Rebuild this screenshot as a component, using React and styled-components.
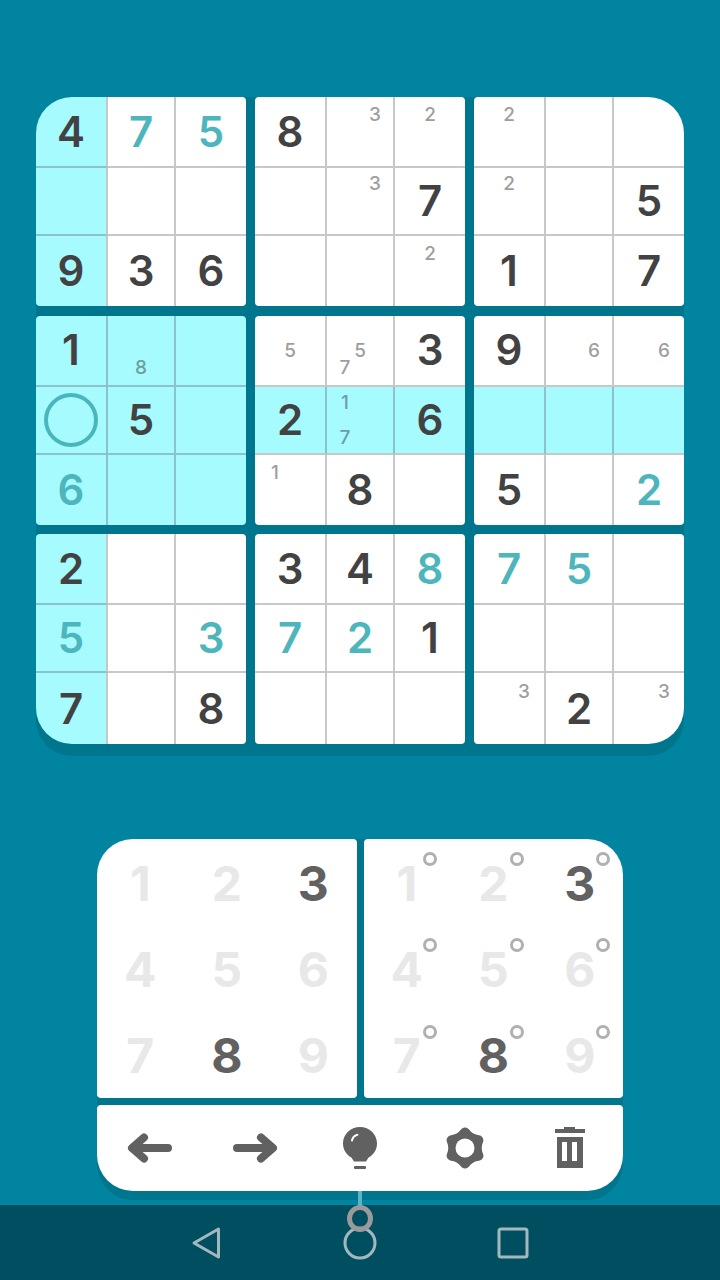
import React from 'react';
import styled, { createGlobalStyle } from 'styled-components';

const GlobalStyle = createGlobalStyle`
  html, body {
    margin: 0;
    padding: 0;
    background: #00849f;
  }
`;

// 'x*' = pre-filled teal digit, 'n..' = pencil notes, 'o' = selected cell
const PUZZLE = [
  ['4', '7*', '5*', '8', 'n3', 'n2', 'n2', '', ''],
  ['', '', '', '', 'n3', '7', 'n2', '', '5'],
  ['9', '3', '6', '', '', 'n2', '1', '', '7'],
  ['1', 'n8', '', 'n5', 'n57', '3', '9', 'n6', 'n6'],
  ['o', '5', '', '2', 'n17', '6', '', '', ''],
  ['6*', '', '', 'n1', '8', '', '5', '', '2*'],
  ['2', '', '', '3', '4', '8*', '7*', '5*', ''],
  ['5*', '', '3*', '7*', '2*', '1', '', '', ''],
  ['7', '', '8', '', '', '', 'n3', '2', 'n3'],
];

const SELECTED = { row: 4, col: 0 };
const DIGITS = [1, 2, 3, 4, 5, 6, 7, 8, 9];
const AVAILABLE = [3, 8];

const isHighlighted = (row, col) =>
  row === SELECTED.row ||
  col === SELECTED.col ||
  (Math.floor(row / 3) === Math.floor(SELECTED.row / 3) &&
    Math.floor(col / 3) === Math.floor(SELECTED.col / 3));

const cornerRadius = (index) => {
  if (index === 0) return '36px 4px 4px 4px';
  if (index === 2) return '4px 36px 4px 4px';
  if (index === 6) return '4px 4px 4px 36px';
  if (index === 8) return '4px 4px 36px 4px';
  return '4px';
};

const Page = styled.div`
  position: relative;
  display: flex;
  flex-direction: column;
  align-items: center;
  width: 720px;
  height: 1280px;
  padding-top: 97px;
  box-sizing: border-box;
  overflow: hidden;
  background: #00849f;
  font-family: Inter, "Liberation Sans", sans-serif;
`;

const Board = styled.div`
  display: grid;
  grid-template-columns: repeat(3, 210px);
  grid-template-rows: 209px 209px 210px;
  column-gap: 9px;
  row-gap: 9.5px;
  width: 648px;
  padding-bottom: 12px;
  border-radius: 36px;
  background: #00758e;
`;

const Block = styled.div`
  display: grid;
  grid-template-columns: 72px 68px 70px;
  grid-template-rows: 71px 68px 1fr;
  overflow: hidden;
  border-radius: ${(p) => p.$radius};
`;

const Cell = styled.div`
  display: flex;
  align-items: center;
  justify-content: center;
  box-sizing: border-box;
  background: ${(p) => (p.$hl ? '#a6fbff' : '#ffffff')};
  border-right: ${(p) => (p.$noRight ? 'none' : `2px solid ${p.$lineRight}`)};
  border-bottom: ${(p) => (p.$noBottom ? 'none' : `2px solid ${p.$lineBottom}`)};
`;

const Digit = styled.span`
  font-size: 42px;
  font-weight: 600;
  line-height: 1;
  color: ${(p) => (p.$given ? '#4db6bc' : '#424242')};
`;

const Notes = styled.div`
  display: grid;
  grid-template-columns: repeat(3, 15px);
  grid-template-rows: repeat(3, 17.5px);
`;

const Note = styled.span`
  display: flex;
  align-items: center;
  justify-content: center;
  font-size: 19px;
  font-weight: 500;
  line-height: 1;
  color: ${(p) => (p.$hl ? '#6f9ea3' : '#9e9e9e')};
`;

const SelectRing = styled.div`
  width: 54px;
  height: 54px;
  box-sizing: border-box;
  border: 4px solid #4bb5bd;
  border-radius: 50%;
`;

const Controls = styled.div`
  display: flex;
  flex-direction: column;
  gap: 7px;
  width: 526px;
  margin-top: 83px;
  padding-bottom: 9px;
  border-radius: 36px;
  background: #00758e;
`;

const Pads = styled.div`
  display: flex;
  gap: 7px;
`;

const Pad = styled.div`
  display: grid;
  grid-template-columns: repeat(3, 1fr);
  grid-template-rows: repeat(3, 1fr);
  flex: 1;
  height: 259px;
  background: #ffffff;
  border-radius: ${(p) => (p.$side === 'left' ? '36px 4px 4px 4px' : '4px 36px 4px 4px')};
`;

const Key = styled.div`
  position: relative;
  display: flex;
  align-items: center;
  justify-content: center;
  padding-top: 3px;
  font-size: 48px;
  font-weight: 700;
  line-height: 1;
  color: ${(p) => (p.$active ? '#616161' : '#e8e8e8')};
`;

const NoteMark = styled.span`
  position: absolute;
  top: 13px;
  right: 13px;
  width: 14px;
  height: 14px;
  box-sizing: border-box;
  border: 3px solid #b0b0b0;
  border-radius: 50%;
`;

const Toolbar = styled.div`
  display: grid;
  grid-template-columns: repeat(5, 1fr);
  height: 86px;
  background: #ffffff;
  border-radius: 4px 4px 36px 36px;
`;

const Tool = styled.div`
  display: flex;
  align-items: center;
  justify-content: center;
  color: #616161;
`;

const NavBar = styled.div`
  display: flex;
  align-items: center;
  justify-content: center;
  gap: 106px;
  width: 100%;
  height: 75px;
  margin-top: auto;
  background: #004f61;
`;

const NavButton = styled.div`
  display: flex;
  align-items: center;
  justify-content: center;
  width: 48px;
  height: 48px;
`;

// touch pointer overlay that sits across the toolbar and the nav bar
const TouchTrail = styled.div`
  position: absolute;
  left: 358px;
  top: 1191px;
  width: 4px;
  height: 15px;
  background: #5fb3c7;
`;

const TouchDot = styled.div`
  position: absolute;
  left: 347px;
  top: 1205px;
  width: 26px;
  height: 27px;
  box-sizing: border-box;
  border: 5px solid #9a9a9a;
  border-radius: 50%;
`;

const ArrowIcon = ({ flip }) => (
  <svg width="46" height="32" viewBox="0 0 46 32" style={flip ? { transform: 'scaleX(-1)' } : undefined}>
    <path
      d="M41 16H6M17 5.5L5 16l12 10.5"
      fill="none"
      stroke="currentColor"
      strokeWidth="8"
      strokeLinecap="round"
      strokeLinejoin="round"
    />
  </svg>
);

const BulbIcon = () => (
  <svg width="36" height="44" viewBox="0 0 36 44">
    <path
      d="M18 1C8.6 1 1 8.4 1 17.4c0 6.2 3.4 11.3 8.4 14l2.6 4h12l2.6-4C31.6 28.7 35 23.6 35 17.4 35 8.4 27.4 1 18 1z"
      fill="currentColor"
    />
    <rect x="12" y="40" width="12" height="3" rx="1" fill="currentColor" />
    <path d="M10 14.5c0.6-3 2.6-5 5.4-5.8" fill="none" stroke="#ffffff" strokeWidth="2" strokeLinecap="round" />
  </svg>
);

const GearIcon = () => (
  <svg width="42" height="42" viewBox="0 0 42 42">
    <path
      d="M21 5.5Q26 12.3 34.4 13.25Q31 21 34.4 28.75Q26 29.7 21 36.5Q16 29.7 7.6 28.75Q11 21 7.6 13.25Q16 12.3 21 5.5z"
      fill="currentColor"
      stroke="currentColor"
      strokeWidth="10"
      strokeLinejoin="round"
    />
    <circle cx="21" cy="21" r="9.5" fill="#ffffff" />
  </svg>
);

const TrashIcon = () => (
  <svg width="30" height="42" viewBox="0 0 30 42">
    <rect x="9" y="0" width="11" height="3" fill="currentColor" />
    <rect x="0" y="2" width="30" height="4" fill="currentColor" />
    <path
      fillRule="evenodd"
      d="M2 10h26v31H2zM7 15v19h5V15zM17 15v19h5V15z"
      fill="currentColor"
    />
  </svg>
);

const BackIcon = () => (
  <svg width="30" height="34" viewBox="0 0 30 34">
    <path d="M27.5 3L3 17l24.5 14z" fill="none" stroke="#a3b8be" strokeWidth="3" strokeLinejoin="round" />
  </svg>
);

const HomeIcon = () => (
  <svg width="34" height="34" viewBox="0 0 34 34">
    <circle cx="17" cy="17" r="15" fill="none" stroke="#a3b8be" strokeWidth="3" />
  </svg>
);

const RecentIcon = () => (
  <svg width="34" height="32" viewBox="0 0 34 32">
    <rect x="2" y="2" width="28" height="28" rx="2" fill="none" stroke="#a3b8be" strokeWidth="3" />
  </svg>
);

const renderCellContent = (token, hl) => {
  if (!token) return null;
  if (token === 'o') return <SelectRing />;
  if (token[0] === 'n') {
    const notes = token.slice(1);
    return (
      <Notes>
        {DIGITS.map((d) => (
          <Note key={d} $hl={hl}>{notes.includes(String(d)) ? d : ''}</Note>
        ))}
      </Notes>
    );
  }
  return <Digit $given={token.endsWith('*')}>{token[0]}</Digit>;
};

const SudokuBlock = ({ index }) => {
  const startRow = Math.floor(index / 3) * 3;
  const startCol = (index % 3) * 3;
  const cells = [];

  for (let row = startRow; row < startRow + 3; row++) {
    for (let col = startCol; col < startCol + 3; col++) {
      const hl = isHighlighted(row, col);
      const rightHl = hl && isHighlighted(row, col + 1);
      const belowHl = hl && isHighlighted(row + 1, col);
      cells.push(
        <Cell
          key={`${row}-${col}`}
          $hl={hl}
          $noRight={col === startCol + 2}
          $noBottom={row === startRow + 2}
          $lineRight={rightHl ? '#8cc3ca' : '#c8c8c8'}
          $lineBottom={belowHl ? '#8cc3ca' : '#c8c8c8'}
        >
          {renderCellContent(PUZZLE[row][col], hl)}
        </Cell>
      );
    }
  }

  return <Block $radius={cornerRadius(index)}>{cells}</Block>;
};

const App = () => (
  <Page>
    <GlobalStyle />
    <Board>
      {DIGITS.map((d) => (
        <SudokuBlock key={d} index={d - 1} />
      ))}
    </Board>

    <Controls>
      <Pads>
        <Pad $side="left">
          {DIGITS.map((d) => (
            <Key key={d} $active={AVAILABLE.includes(d)}>{d}</Key>
          ))}
        </Pad>
        <Pad $side="right">
          {DIGITS.map((d) => (
            <Key key={d} $active={AVAILABLE.includes(d)}>
              {d}
              <NoteMark />
            </Key>
          ))}
        </Pad>
      </Pads>
      <Toolbar>
        <Tool><ArrowIcon /></Tool>
        <Tool><ArrowIcon flip /></Tool>
        <Tool><BulbIcon /></Tool>
        <Tool><GearIcon /></Tool>
        <Tool><TrashIcon /></Tool>
      </Toolbar>
    </Controls>

    <NavBar>
      <NavButton><BackIcon /></NavButton>
      <NavButton><HomeIcon /></NavButton>
      <NavButton><RecentIcon /></NavButton>
    </NavBar>
    <TouchTrail />
    <TouchDot />
  </Page>
);

export default App;
